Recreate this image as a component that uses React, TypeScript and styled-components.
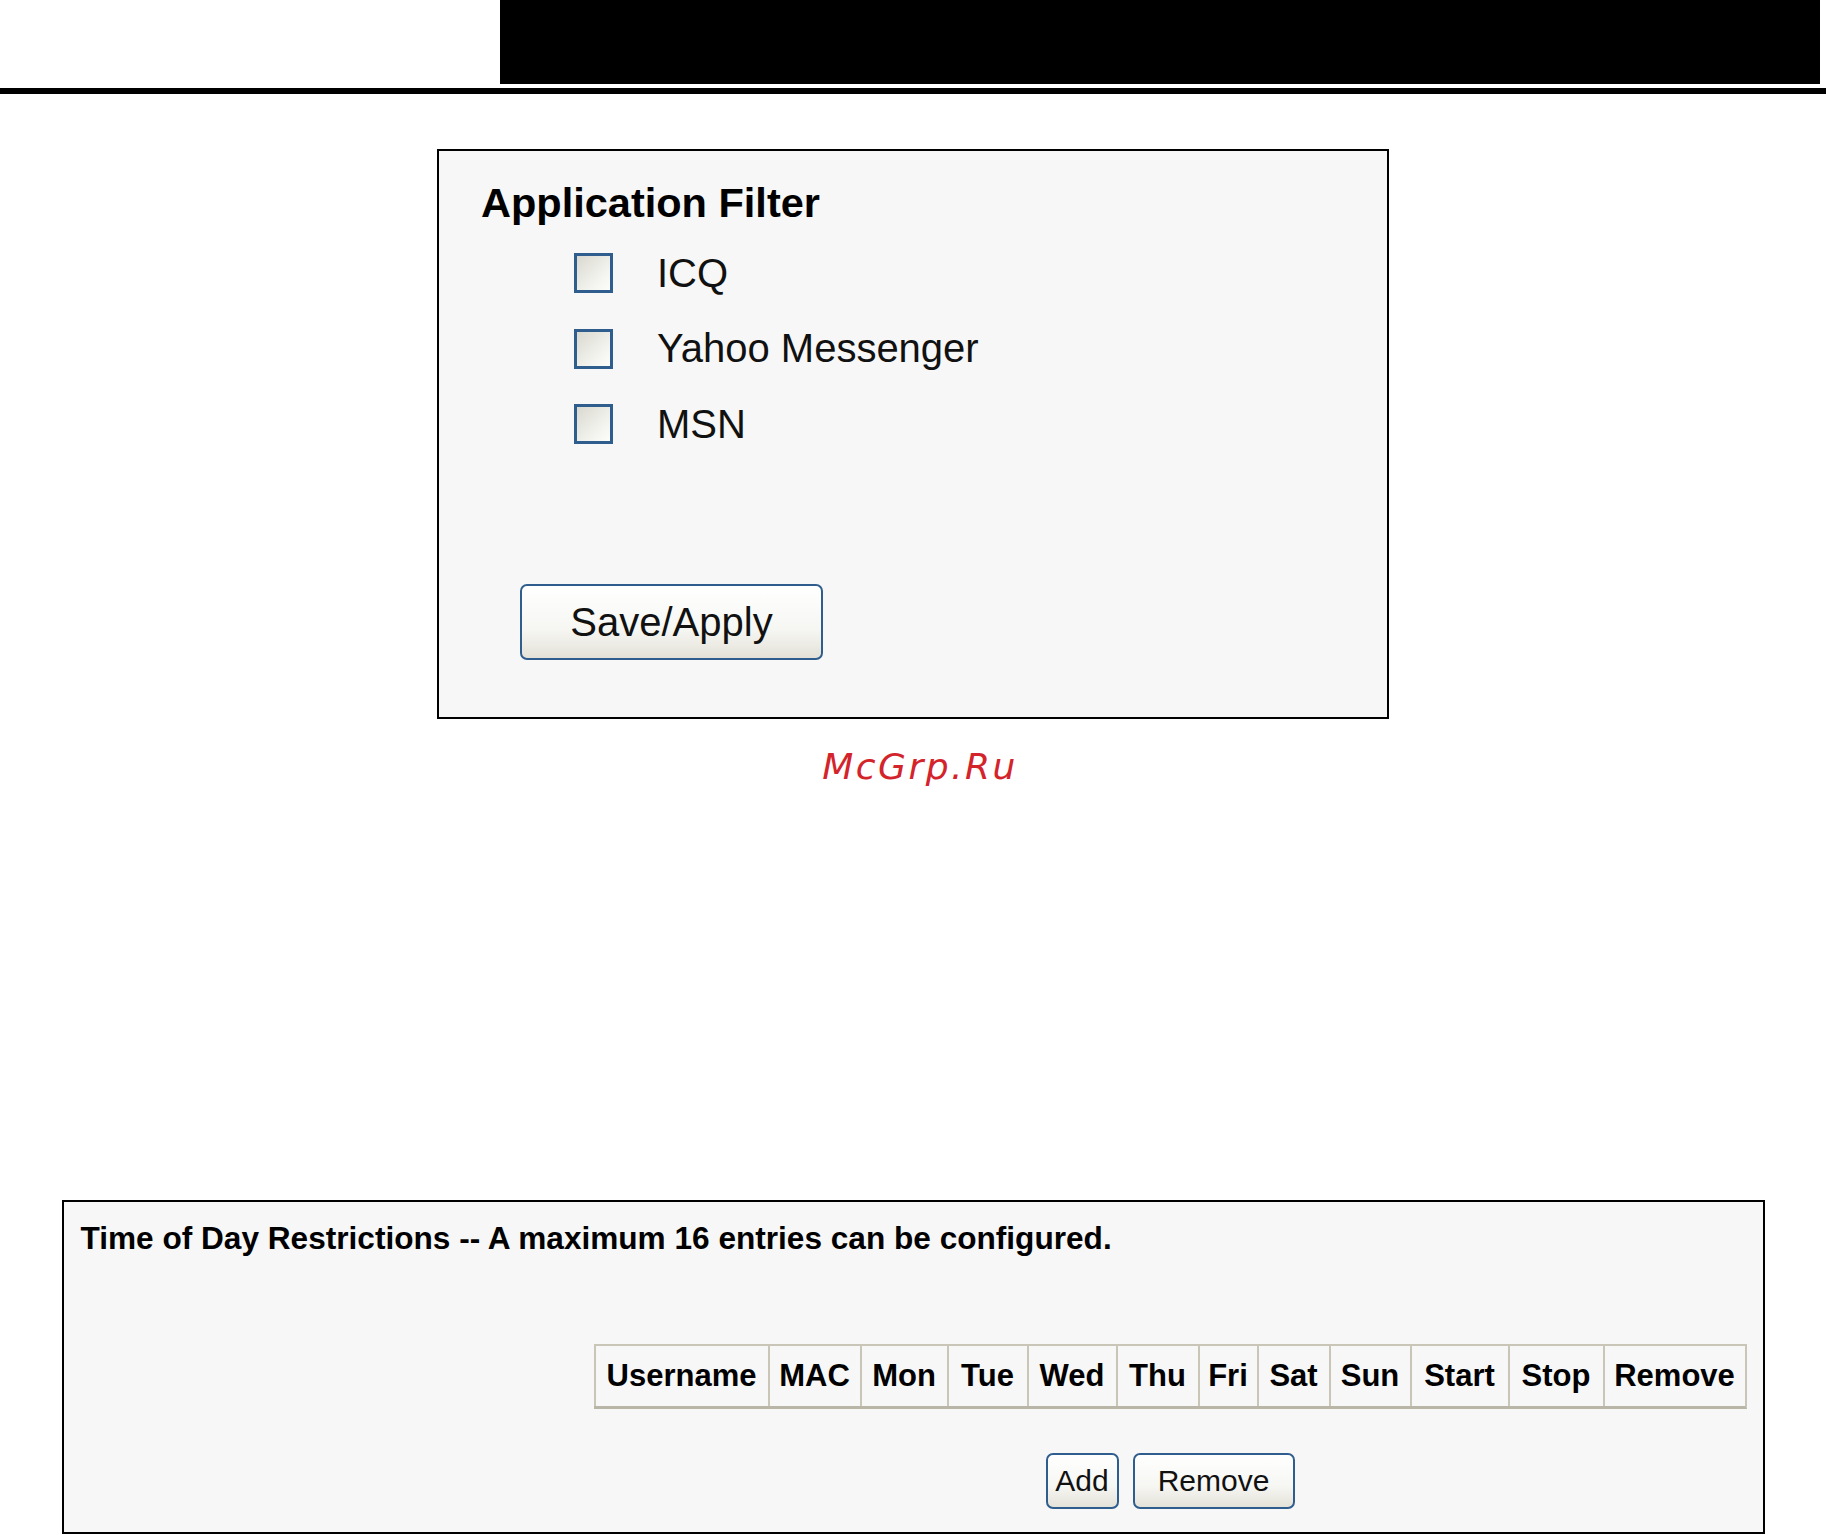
import styled, { createGlobalStyle } from "styled-components";

const GlobalStyle = createGlobalStyle`
  html, body {
    margin: 0;
    padding: 0;
    background: #ffffff;
  }
  body {
    font-family: "Liberation Sans", Arial, sans-serif;
    color: #000;
  }
`;

const Components = {
  Page: styled.div`
    width: 1826px;
    display: flex;
    flex-direction: column;
  `,
  Header: styled.div`
    display: flex;
    justify-content: flex-end;
    padding-right: 6px;
  `,
  HeaderBar: styled.div`
    width: 1320px;
    height: 84px;
    background: #000;
  `,
  Rule: styled.div`
    margin-top: 4px;
    height: 6px;
    background: #000;
  `,
  FilterBox: styled.section`
    align-self: center;
    margin-top: 55px;
    width: 952px;
    box-sizing: border-box;
    border: 2px solid #000;
    background: #f7f7f7;
    padding: 28px 0 57px 42px;
    display: flex;
    flex-direction: column;
  `,
  Title: styled.h2`
    margin: 0;
    font-size: 41.5px;
    line-height: 48px;
    font-weight: bold;
  `,
  Options: styled.div`
    margin-top: 26px;
    padding-left: 93px;
    display: flex;
    flex-direction: column;
    gap: 35.5px;
  `,
  Option: styled.label`
    display: flex;
    align-items: center;
    gap: 44px;
    height: 40px;
    font-size: 40px;
    color: #111;
  `,
  Check: styled.input`
    appearance: none;
    margin: 0;
    width: 39px;
    height: 40px;
    box-sizing: border-box;
    border: 3px solid #2f5e8e;
    background: linear-gradient(135deg, #d9d9d0 0%, #efefea 55%, #fdfdfb 100%);
  `,
  Actions: styled.div<{ $top: number; $left?: number; $justify?: string }>`
    margin-top: ${(p) => p.$top}px;
    padding-left: ${(p) => p.$left || 0}px;
    display: flex;
    justify-content: ${(p) => p.$justify || "flex-start"};
    gap: 14px;
  `,
  Button: styled.button<{ $w: number; $h: number; $fs: number }>`
    width: ${(p) => p.$w}px;
    height: ${(p) => p.$h}px;
    box-sizing: border-box;
    padding: 0;
    border: 2px solid #2f5e8e;
    border-radius: 7px;
    background: linear-gradient(180deg, #ffffff 0%, #f6f6f3 60%, #e4e2d8 100%);
    font-family: "Liberation Sans", Arial, sans-serif;
    font-size: ${(p) => p.$fs}px;
    color: #111;
  `,
  Watermark: styled.div`
    margin-top: 27px;
    padding-left: 14px;
    text-align: center;
    font-family: "DejaVu Sans", sans-serif;
    font-style: italic;
    font-size: 36px;
    line-height: 42px;
    letter-spacing: 2.5px;
    color: #d4242b;
  `,
  RulesBox: styled.section`
    align-self: center;
    margin-top: 412px;
    width: 1703px;
    height: 334px;
    box-sizing: border-box;
    border: 2px solid #000;
    background: #f7f7f7;
    padding: 18px 16px 23px 17px;
    display: flex;
    flex-direction: column;
  `,
  Heading: styled.p`
    margin: 0;
    font-size: 31.6px;
    line-height: 36px;
    font-weight: bold;
  `,
  TableBlock: styled.div`
    margin-top: 88px;
    align-self: flex-end;
    display: flex;
    flex-direction: column;
  `,
  Table: styled.table`
    border-collapse: separate;
    border-spacing: 0;
    border-bottom: 3px solid #b9b6a8;
    border-right: 2px solid #c9c6b8;
  `,
  Cell: styled.th<{ $w: number }>`
    width: ${(p) => p.$w}px;
    height: 62px;
    box-sizing: border-box;
    padding: 0;
    border-top: 2px solid #c9c6b8;
    border-left: 2px solid #c9c6b8;
    font-size: 31px;
    font-weight: bold;
    text-align: center;
    white-space: nowrap;
  `,
};

const columns: [string, number][] = [
  ["Username", 174],
  ["MAC", 92],
  ["Mon", 87],
  ["Tue", 80],
  ["Wed", 89],
  ["Thu", 82],
  ["Fri", 59],
  ["Sat", 72],
  ["Sun", 81],
  ["Start", 98],
  ["Stop", 95],
  ["Remove", 142],
];

const apps = ["ICQ", "Yahoo Messenger", "MSN"];

export default function App() {
  return (
    <Components.Page>
      <GlobalStyle />
      <Components.Header>
        <Components.HeaderBar />
      </Components.Header>
      <Components.Rule />

      <Components.FilterBox>
        <Components.Title>Application Filter</Components.Title>
        <Components.Options>
          {apps.map((app) => (
            <Components.Option key={app}>
              <Components.Check type="checkbox" />
              {app}
            </Components.Option>
          ))}
        </Components.Options>
        <Components.Actions $top={140} $left={39}>
          <Components.Button $w={303} $h={76} $fs={40}>
            Save/Apply
          </Components.Button>
        </Components.Actions>
      </Components.FilterBox>

      <Components.Watermark>McGrp.Ru</Components.Watermark>

      <Components.RulesBox>
        <Components.Heading>
          Time of Day Restrictions -- A maximum 16 entries can be configured.
        </Components.Heading>
        <Components.TableBlock>
          <Components.Table>
            <thead>
              <tr>
                {columns.map(([label, w]) => (
                  <Components.Cell key={label} $w={w}>
                    {label}
                  </Components.Cell>
                ))}
              </tr>
            </thead>
          </Components.Table>
          <Components.Actions $top={44} $justify="center">
            <Components.Button $w={73} $h={56} $fs={30}>
              Add
            </Components.Button>
            <Components.Button $w={162} $h={56} $fs={30}>
              Remove
            </Components.Button>
          </Components.Actions>
        </Components.TableBlock>
      </Components.RulesBox>
    </Components.Page>
  );
}
